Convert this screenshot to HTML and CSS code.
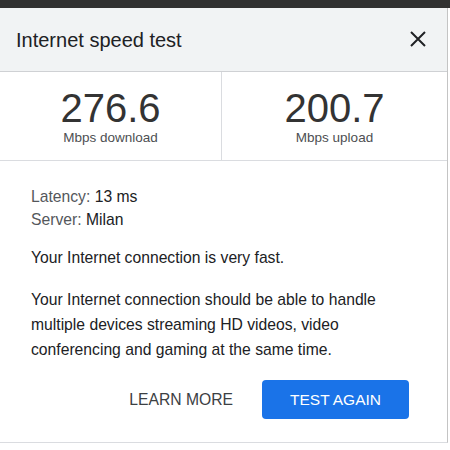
FILE: index.html
```html
<!DOCTYPE html>
<html lang="en">
<head>
<meta charset="utf-8">
<title>Internet speed test</title>
<link rel="stylesheet" href="styles.css">
</head>
<body>
<div class="topbar"></div>
<div class="panel">
  <div class="header">
    <div class="title">Internet speed test</div>
    <svg class="close" width="16" height="16" viewBox="0 0 16 16" aria-label="Close">
      <path d="M1 1 L15 15 M15 1 L1 15" stroke="#202124" stroke-width="2" fill="none"/>
    </svg>
  </div>
  <div class="stats">
    <div class="stat">
      <div class="num">276.6</div>
      <div class="label">Mbps download</div>
    </div>
    <div class="stat">
      <div class="num">200.7</div>
      <div class="label">Mbps upload</div>
    </div>
  </div>
  <div class="content">
    <div class="meta">
      <div><span class="key">Latency:</span> 13 ms</div>
      <div><span class="key">Server:</span> Milan</div>
    </div>
    <p class="line">Your Internet connection is very fast.</p>
    <p class="para">Your Internet connection should be able to handle multiple devices streaming HD videos, video conferencing and gaming at the same time.</p>
    <div class="actions">
      <button class="btn-text">LEARN MORE</button>
      <button class="btn-primary">TEST AGAIN</button>
    </div>
  </div>
</div>
</body>
</html>
```

FILE: styles.css
```css
html, body {
  margin: 0;
  padding: 0;
  background: #ffffff;
  font-family: "Liberation Sans", Arial, sans-serif;
  color: #202124;
}

.topbar {
  height: 8px;
  background: #313131;
}

.panel {
  width: 447px;
  border-right: 1px solid #c4c4c4;
  border-bottom: 1px solid #dadce0;
}

.header {
  height: 63px;
  background: #f1f3f4;
  border-bottom: 1px solid #cfd1d4;
  display: flex;
  align-items: center;
  justify-content: space-between;
  padding: 0 21px 0 16px;
}

.title {
  font-size: 20px;
  color: #202124;
  padding-top: 2px;
}

.close {
  display: block;
  margin-top: -1px;
}

.stats {
  display: grid;
  grid-template-columns: 222px 1fr;
  border-bottom: 1px solid #dadce0;
}

.stat {
  display: flex;
  flex-direction: column;
  align-items: center;
  padding: 14px 0 15px;
}

.stat:first-child {
  border-right: 1px solid #dadce0;
}

.num {
  font-size: 40px;
  line-height: 44px;
  color: #333333;
}

.label {
  font-size: 13.5px;
  line-height: 15px;
  color: #4d4f52;
}

.content {
  padding: 24px 31px 23px;
  font-size: 15.7px;
}

.meta {
  line-height: 23px;
  color: #202124;
}

.key {
  color: #54575b;
}

.line {
  margin: 14px 0 0;
  line-height: 25px;
}

.para {
  margin: 17px 0 0;
  line-height: 25px;
}

.actions {
  display: flex;
  justify-content: flex-end;
  align-items: center;
  gap: 29px;
  margin-top: 18px;
  padding-right: 7px;
}

.btn-text {
  border: none;
  background: none;
  padding: 0;
  font-family: inherit;
  font-size: 15.7px;
  color: #3c4043;
}

.btn-primary {
  border: none;
  background: #1a73e8;
  color: #ffffff;
  font-family: inherit;
  font-size: 15.5px;
  height: 39px;
  width: 147px;
  border-radius: 4px;
  padding: 0;
}
```
